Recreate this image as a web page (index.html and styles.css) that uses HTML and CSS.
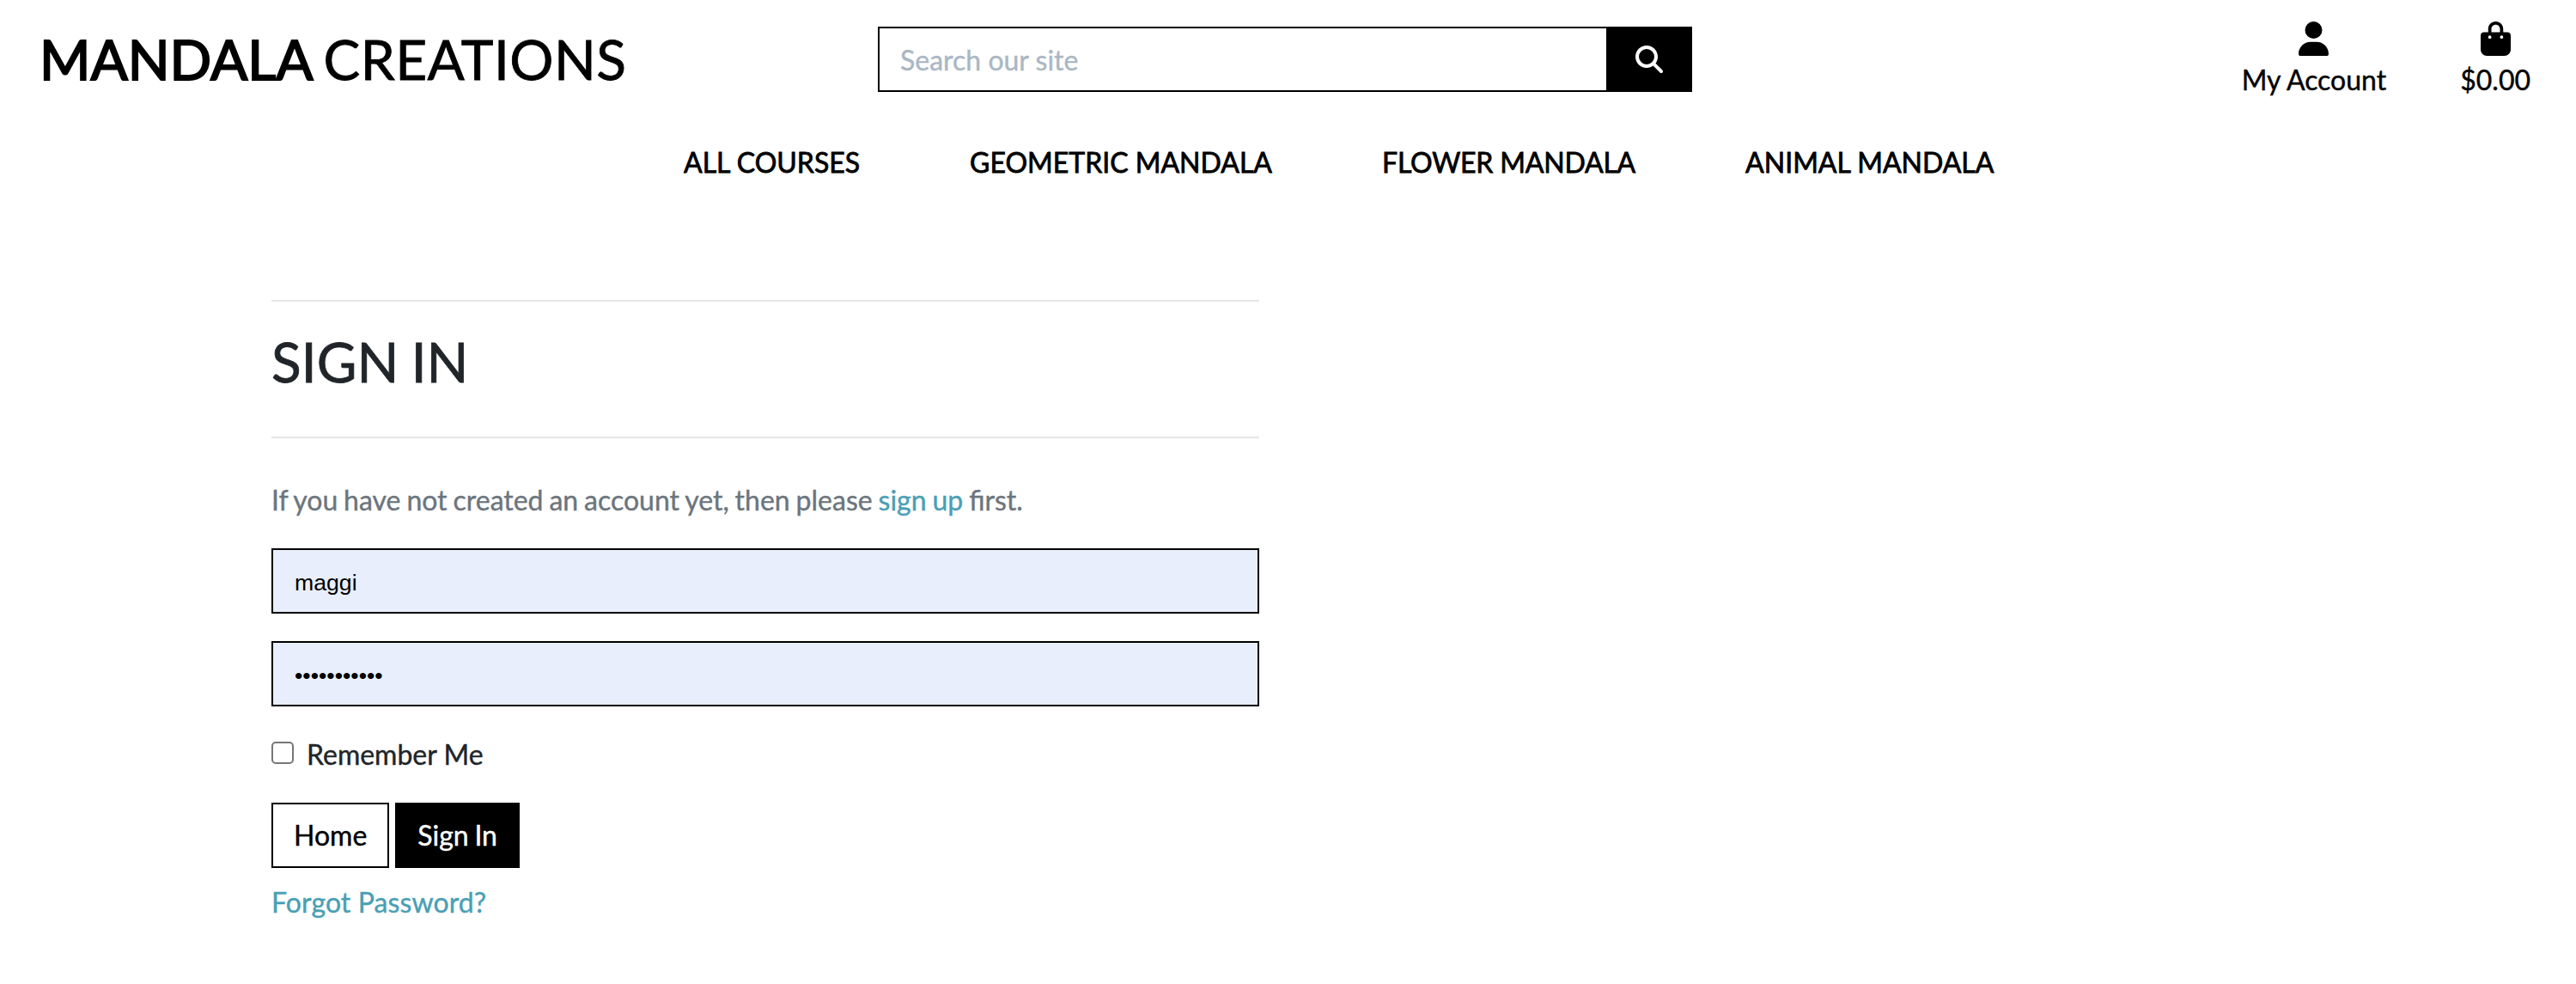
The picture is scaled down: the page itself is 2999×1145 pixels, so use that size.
FILE: index.html
```html
<!DOCTYPE html>
<html lang="en">
<head>
<meta charset="utf-8">
<title>Mandala Creations</title>
<link rel="stylesheet" href="styles.css">
</head>
<body>
<header class="topbar">
  <a class="logo" href="#"><strong>MANDALA</strong> <span class="logo-rest">CREATIONS</span></a>
  <form class="search">
    <input class="search-input" type="text" placeholder="Search our site" aria-label="Search">
    <button class="search-button" type="button" aria-label="Search">
      <svg viewBox="0 0 512 512" width="32" height="32"><path fill="#fff" d="M416 208c0 45.9-14.9 88.3-40 122.7L502.6 457.4c12.5 12.5 12.5 32.8 0 45.3s-32.8 12.5-45.3 0L330.7 376c-34.4 25.2-76.8 40-122.7 40C93.1 416 0 322.9 0 208S93.1 0 208 0S416 93.1 416 208zM208 352a144 144 0 1 0 0-288 144 144 0 1 0 0 288z"/></svg>
    </button>
  </form>
  <div class="tools">
    <a class="tool" href="#">
      <svg viewBox="0 0 448 512" width="35" height="40"><path d="M224 256A128 128 0 1 0 224 0a128 128 0 1 0 0 256zm-45.7 48C79.8 304 0 383.8 0 482.3C0 498.7 13.3 512 29.7 512H418.3c16.4 0 29.7-13.3 29.7-29.7C448 383.8 368.2 304 269.7 304H178.3z"/></svg>
      <span>My Account</span>
    </a>
    <a class="tool" href="#">
      <svg viewBox="0 0 448 512" width="35" height="40"><path d="M160 112c0-35.3 28.7-64 64-64s64 28.7 64 64v48H160V112zm-48 48H48c-26.5 0-48 21.5-48 48V416c0 53 43 96 96 96H352c53 0 96-43 96-96V208c0-26.5-21.5-48-48-48H336V112C336 50.1 285.9 0 224 0S112 50.1 112 112v48zm24 48a24 24 0 1 1 0 48 24 24 0 1 1 0-48zm152 24a24 24 0 1 1 48 0 24 24 0 1 1 -48 0z"/></svg>
      <span>$0.00</span>
    </a>
  </div>
</header>
<nav class="nav">
  <a href="#">ALL COURSES</a>
  <a href="#">GEOMETRIC MANDALA</a>
  <a class="tight" href="#">FLOWER MANDALA</a>
  <a href="#">ANIMAL MANDALA</a>
</nav>
<main class="content">
  <hr class="rule">
  <h2 class="title">SIGN IN</h2>
  <hr class="rule">
  <p class="hint">If you have not created an account yet, then please <a class="link" href="#">sign up</a> first.</p>
  <form class="form">
    <input class="field" type="text" value="maggi" aria-label="Username">
    <input class="field" type="password" value="mandala1234" aria-label="Password">
    <label class="remember"><input class="check" type="checkbox"><span>Remember Me</span></label>
    <div class="actions">
      <a class="btn" href="#">Home</a>
      <button class="btn btn-dark" type="button">Sign In</button>
    </div>
    <a class="link forgot" href="#">Forgot Password?</a>
  </form>
</main>
</body>
</html>
```
FILE: styles.css
```css
* { box-sizing: border-box; }
body {
  margin: 0;
  min-height: 1145px;
  background: #fff;
  color: #212529;
  font: 400 32px/48px Lato, sans-serif;
  -webkit-text-stroke: 0.4px currentColor;
}
a { color: #000; text-decoration: none; }
.topbar {
  display: grid;
  grid-template-columns: 976px 948px 1fr;
  padding: 25px 53px 0 46px;
  height: 135px;
  align-items: start;
}
.logo {
  display: flex;
  gap: 12px;
  margin-top: 5px;
  font-size: 64px;
  line-height: 77px;
  white-space: nowrap;
}
.logo strong { font-weight: 400; -webkit-text-stroke: 2px #000; }
.logo-rest { letter-spacing: 0.4px; -webkit-text-stroke: 0.8px #000; }
.search { display: flex; height: 76px; margin-top: 6px; }
.search-input {
  flex: 1;
  min-width: 0;
  padding: 1px 24px 0;
  border: 2px solid #000;
  border-right: 0;
  border-radius: 0;
  background: #fff;
  font: inherit;
  outline: 0;
}
.search-input::placeholder { color: #aab7c4; opacity: 1; }
.search-button {
  display: flex;
  align-items: center;
  justify-content: center;
  width: 100px;
  padding: 0;
  border: 0;
  background: #000;
}
.tools { display: flex; justify-content: flex-end; gap: 86px; }
.tool { display: flex; flex-direction: column; align-items: center; gap: 4px; }
.tool svg { display: block; }
.nav {
  display: flex;
  gap: 128px;
  padding: 30px 0 0 796px;
  height: 88px;
  line-height: 48px;
  white-space: nowrap;
}
.nav a { -webkit-text-stroke: 0.8px #000; }
.nav .tight { letter-spacing: -0.2px; }
.content { width: 1150px; margin: 126px 0 0 316px; }
.rule { height: 2px; margin: 0; border: 0; background: #e5e5e5; }
.title {
  margin: 31px 0 49px;
  font-size: 64px;
  line-height: 77px;
  font-weight: 400;
  word-spacing: -2px;
  -webkit-text-stroke: 0.8px currentColor;
}
.hint { margin: 48px 0 32px; color: #6c757d; word-spacing: -1.3px; }
.link { color: #4a9fb5; }
.form { display: flex; flex-direction: column; align-items: flex-start; }
.field {
  width: 100%;
  height: 76px;
  margin-bottom: 32px;
  padding: 4px 25px 0;
  border: 2px solid #000;
  border-radius: 0;
  background: #e8eefc;
  color: #000;
  font: 26.67px "Liberation Sans", Arial, sans-serif;
  -webkit-text-stroke: 0;
  outline: 0;
}
.remember { display: flex; gap: 15px; margin-bottom: 32px; }
.check {
  appearance: none;
  width: 26px;
  height: 26px;
  margin: 9px 0 0;
  border: 2px solid #767676;
  border-radius: 5px;
  background: #fff;
}
.actions { display: flex; gap: 7px; margin-bottom: 16px; }
.btn {
  height: 76px;
  padding: 12px 24px;
  border: 2px solid #000;
  background: #fff;
  color: #000;
  font: inherit;
}
.btn-dark { background: #000; color: #fff; word-spacing: -1.5px; }
.forgot { letter-spacing: 0.1px; }
```
